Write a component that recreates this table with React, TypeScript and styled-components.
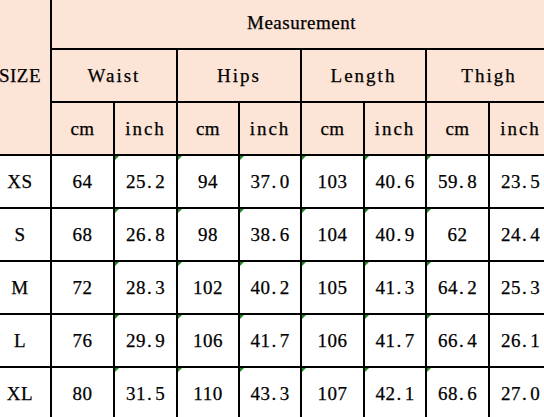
import * as React from 'react';
import styled, { createGlobalStyle } from 'styled-components';

const GlobalStyle = createGlobalStyle`
	html, body {
		margin: 0;
		padding: 0;
		background: #ffffff;
		overflow: hidden;
	}
`;

const Chart = styled.div`
	display: grid;
	grid-template-columns: 60px 61px 61px 60px 60px 61px 60px 61px 61px;
	grid-auto-rows: 51px;
	gap: 2px;
	padding: 2px;
	background: #000000;
	width: max-content;
	margin: -5px 0 0 -12px;
`;

const Cell = styled.div<{ $head?: boolean; $flag?: boolean; $col?: string; $row?: string; $wide?: boolean }>`
	position: relative;
	display: flex;
	align-items: center;
	justify-content: center;
	background: ${p => (p.$head ? '#fce4d6' : '#ffffff')};
	color: #000000;
	font-family: "Liberation Serif", "DejaVu Serif", serif;
	font-size: 19px;
	-webkit-text-stroke: 0.25px #000000;
	letter-spacing: ${p => (p.$wide ? '2px' : '0.5px')};
	white-space: nowrap;
	grid-column: ${p => p.$col || 'auto'};
	grid-row: ${p => p.$row || 'auto'};
	&::before {
		content: "";
		display: ${p => (p.$flag ? 'block' : 'none')};
		position: absolute;
		top: 0;
		left: 0;
		border-top: 4px solid #1e8c1e;
		border-right: 4px solid transparent;
	}
`;

// the sheet's half-width dot leaves extra room after it
const Dot = styled.span`
	margin: 0 3px 0 1px;
`;

const groups = ['Waist', 'Hips', 'Length', 'Thigh'];

const rows: [string, string[]][] = [
	['XS', ['64', '25.2', '94', '37.0', '103', '40.6', '59.8', '23.5']],
	['S', ['68', '26.8', '98', '38.6', '104', '40.9', '62', '24.4']],
	['M', ['72', '28.3', '102', '40.2', '105', '41.3', '64.2', '25.3']],
	['L', ['76', '29.9', '106', '41.7', '106', '41.7', '66.4', '26.1']],
	['XL', ['80', '31.5', '110', '43.3', '107', '42.1', '68.6', '27.0']],
];

const Value = ({ v }: { v: string }) => {
	const [a, b] = v.split('.');
	if (b === undefined) return <>{a}</>;
	return (
		<>
			{a}
			<Dot>.</Dot>
			{b}
		</>
	);
};

export default function App() {
	return (
		<>
			<GlobalStyle />
			<Chart>
				<Cell $head $row="span 3">SIZE</Cell>
				<Cell $head $col="span 8">Measurement</Cell>
				{groups.map(g => (
					<Cell key={g} $head $col="span 2" $wide>{g}</Cell>
				))}
				{groups.map(g => (
					<React.Fragment key={g}>
						<Cell $head>cm</Cell>
						<Cell $head $wide>inch</Cell>
					</React.Fragment>
				))}
				{rows.map(([size, values]) => (
					<React.Fragment key={size}>
						<Cell>{size}</Cell>
						{values.map((v, i) => (
							<Cell key={i} $flag={i > 0 && i < 7}>
								<Value v={v} />
							</Cell>
						))}
					</React.Fragment>
				))}
			</Chart>
		</>
	);
}
